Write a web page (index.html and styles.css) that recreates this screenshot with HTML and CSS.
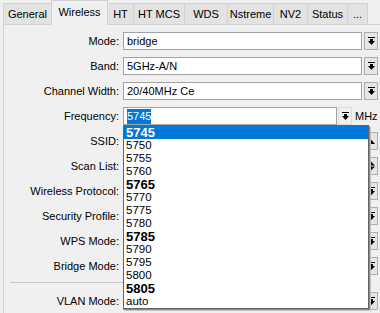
FILE: index.html
```html
<!DOCTYPE html>
<html>
<head>
<meta charset="utf-8">
<link rel="stylesheet" href="styles.css">
</head>
<body>
<div class="win">
  <div class="tabs">
    <div class="tab t-general">General</div>
    <div class="tab active t-wireless">Wireless</div>
    <div class="tab t-ht">HT</div>
    <div class="tab t-htmcs">HT MCS</div>
    <div class="tab t-wds">WDS</div>
    <div class="tab t-nstreme">Nstreme</div>
    <div class="tab t-nv2">NV2</div>
    <div class="tab t-status">Status</div>
    <div class="tab t-more">...</div>
  </div>
  <div class="panel">
    <div class="row">
      <div class="label">Mode:</div>
      <div class="field">bridge</div>
      <div class="btn"><svg width="7" height="8" viewBox="0 0 7 8"><path d="M0 0.5h7" stroke="#000"/><path d="M2 2h3v2h2l-3.5 4L0 4h2z" fill="#000"/></svg></div>
    </div>
    <div class="row">
      <div class="label">Band:</div>
      <div class="field">5GHz-A/N</div>
      <div class="btn"><svg width="7" height="8" viewBox="0 0 7 8"><path d="M0 0.5h7" stroke="#000"/><path d="M2 2h3v2h2l-3.5 4L0 4h2z" fill="#000"/></svg></div>
    </div>
    <div class="row">
      <div class="label">Channel Width:</div>
      <div class="field">20/40MHz Ce</div>
      <div class="btn"><svg width="7" height="8" viewBox="0 0 7 8"><path d="M0 0.5h7" stroke="#000"/><path d="M2 2h3v2h2l-3.5 4L0 4h2z" fill="#000"/></svg></div>
    </div>
    <div class="row">
      <div class="label">Frequency:</div>
      <div class="field field-freq">
        <span class="sel">5745</span>
        <div class="listbox">
          <div class="item hl">5745</div>
          <div class="item">5750</div>
          <div class="item">5755</div>
          <div class="item">5760</div>
          <div class="item b">5765</div>
          <div class="item">5770</div>
          <div class="item">5775</div>
          <div class="item">5780</div>
          <div class="item b">5785</div>
          <div class="item">5790</div>
          <div class="item">5795</div>
          <div class="item">5800</div>
          <div class="item b">5805</div>
          <div class="item">auto</div>
        </div>
      </div>
      <div class="btn btn-flat"><svg width="7" height="8" viewBox="0 0 7 8"><path d="M0 0.5h7" stroke="#000"/><path d="M2 2h3v2h2l-3.5 4L0 4h2z" fill="#000"/></svg></div>
      <div class="unit">MHz</div>
    </div>
    <div class="row">
      <div class="label">SSID:</div>
      <div class="field"></div>
      <div class="btn"><svg width="8" height="5" viewBox="0 0 8 5"><path d="M0 5L4 0.5L8 5z" fill="#000"/></svg></div>
    </div>
    <div class="row">
      <div class="label">Scan List:</div>
      <div class="field"></div>
      <div class="btn"><svg width="8" height="10" viewBox="0 0 8 10"><path d="M0 4.5L4 0.5L8 4.5z" fill="#000"/><path d="M0 5.5h8L4 9.5z" fill="#000"/></svg></div>
    </div>
    <div class="row">
      <div class="label">Wireless Protocol:</div>
      <div class="field"></div>
      <div class="btn"><svg width="7" height="8" viewBox="0 0 7 8"><path d="M0 0.5h7" stroke="#000"/><path d="M2 2h3v2h2l-3.5 4L0 4h2z" fill="#000"/></svg></div>
    </div>
    <div class="row">
      <div class="label">Security Profile:</div>
      <div class="field"></div>
      <div class="btn"><svg width="7" height="8" viewBox="0 0 7 8"><path d="M0 0.5h7" stroke="#000"/><path d="M2 2h3v2h2l-3.5 4L0 4h2z" fill="#000"/></svg></div>
    </div>
    <div class="row">
      <div class="label">WPS Mode:</div>
      <div class="field"></div>
      <div class="btn"><svg width="7" height="8" viewBox="0 0 7 8"><path d="M0 0.5h7" stroke="#000"/><path d="M2 2h3v2h2l-3.5 4L0 4h2z" fill="#000"/></svg></div>
    </div>
    <div class="row">
      <div class="label">Bridge Mode:</div>
      <div class="field"></div>
      <div class="btn"><svg width="7" height="8" viewBox="0 0 7 8"><path d="M0 0.5h7" stroke="#000"/><path d="M2 2h3v2h2l-3.5 4L0 4h2z" fill="#000"/></svg></div>
    </div>
    <div class="sep"></div>
    <div class="row">
      <div class="label">VLAN Mode:</div>
      <div class="field"></div>
      <div class="btn"><svg width="7" height="8" viewBox="0 0 7 8"><path d="M0 0.5h7" stroke="#000"/><path d="M2 2h3v2h2l-3.5 4L0 4h2z" fill="#000"/></svg></div>
    </div>
  </div>
</div>
</body>
</html>
```

FILE: styles.css
```css
html, body {
  margin: 0;
  padding: 0;
  background: #f0f0f0;
  overflow: hidden;
}
.win {
  width: 380px;
  height: 313px;
  font-family: "Liberation Sans", Arial, sans-serif;
  font-size: 11px;
  color: #000;
  overflow: hidden;
}
.tabs {
  display: flex;
  align-items: flex-end;
  height: 24px;
  padding-left: 3px;
  position: relative;
  z-index: 2;
}
.tab {
  box-sizing: border-box;
  height: 21px;
  line-height: 20px;
  text-align: center;
  background: #e3e3e3;
  border: 1px solid #d2d2d2;
  border-bottom: none;
  margin-right: -1px;
  white-space: nowrap;
}
.tab.active {
  line-height: 22px;
  background: #f0f0f0;
  border-color: #d2d2d2;
  margin-bottom: -1px;
  height: 25px;
  position: relative;
  z-index: 1;
}
.t-general { width: 49px; }
.t-wireless { width: 57px; }
.t-ht { width: 27px; }
.t-htmcs { width: 52px; }
.t-wds { width: 44px; }
.t-nstreme { width: 47px; }
.t-nv2 { width: 35px; }
.t-status { width: 41px; }
.t-more { width: 21px; }
.panel {
  margin-left: 3px;
  border-left: 1px solid #d2d2d2;
  border-top: 1px solid #d2d2d2;
  padding-top: 7px;
  display: flex;
  flex-direction: column;
  gap: 7px;
  height: 300px;
}
.row {
  display: flex;
  align-items: center;
  height: 18px;
  padding-right: 2px;
}
.label {
  width: 115px;
  text-align: right;
  margin-right: 4px;
  white-space: nowrap;
}
.field {
  box-sizing: border-box;
  flex: 1;
  height: 18px;
  background: #fff;
  border: 1px solid #a3a3a3;
  padding-left: 3px;
  line-height: 16px;
  white-space: nowrap;
}
.field-freq {
  flex: none;
  width: 214px;
  position: relative;
  z-index: 5;
}
.sel {
  display: inline-block;
  background: #0078d7;
  color: #fff;
  height: 15px;
  line-height: 15px;
}
.btn {
  box-sizing: border-box;
  width: 14px;
  height: 18px;
  margin-left: 2px;
  background: #e6e6e6;
  border: 1px solid #adadad;
  display: flex;
  align-items: center;
  justify-content: center;
}
.btn-flat {
  margin-left: 1px;
  background: #f0f0f0;
  border-color: #dcdcdc;
}
.unit {
  margin-left: 3px;
  white-space: nowrap;
}
.sep {
  height: 1px;
  background: #c8c8c8;
  margin: 0 10px 2px 6px;
}
.listbox {
  position: absolute;
  left: -1px;
  top: 17px;
  box-sizing: border-box;
  width: 246px;
  height: 184px;
  background: #fff;
  border: 1px solid #646464;
  box-shadow: 1px 1px 0 #8a8a8a, 2px 2px 0 #c4c4c4;
  display: flex;
  flex-direction: column;
}
.item {
  height: 13px;
  line-height: 13px;
  padding-left: 2px;
  font-size: 11.5px;
  color: #000;
}
.item.b {
  font-weight: bold;
  font-size: 13px;
}
.item.hl {
  background: #0078d7;
  color: #fff;
  font-weight: bold;
  font-size: 13px;
}
```
